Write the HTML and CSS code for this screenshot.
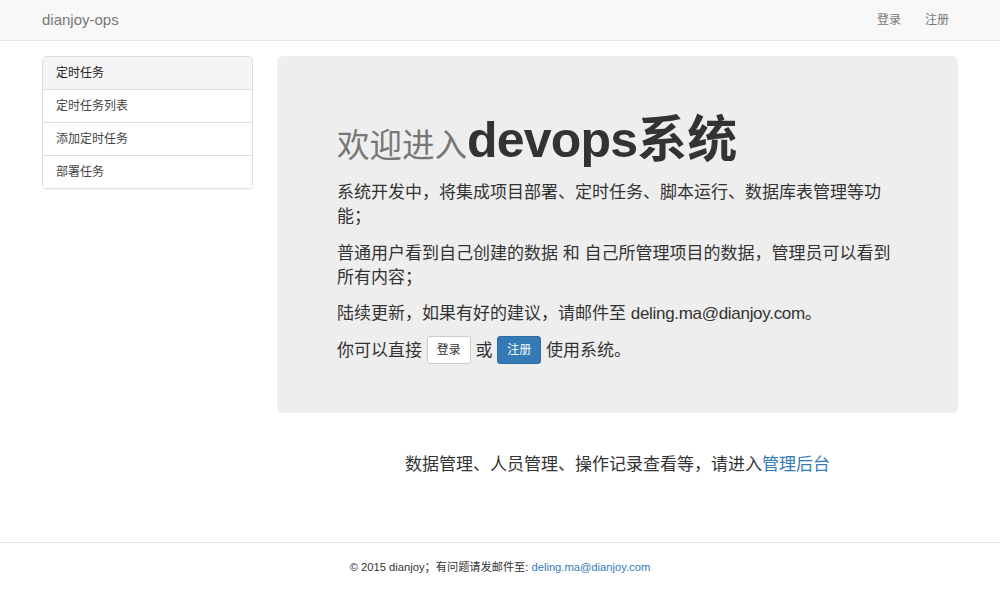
FILE: index.html
```html
<!DOCTYPE html>
<html lang="zh-CN">
<head>
<meta charset="utf-8">
<title>dianjoy-ops</title>
<link rel="stylesheet" href="styles.css">
</head>
<body>
<nav class="navbar">
  <div class="navbar-inner">
    <a class="brand" href="#">dianjoy-ops</a>
    <ul class="nav-right">
      <li><a href="#">登录</a></li>
      <li><a href="#">注册</a></li>
    </ul>
  </div>
</nav>
<main class="main">
  <aside class="sidebar">
    <div class="list-group">
      <div class="list-item list-head">定时任务</div>
      <a class="list-item" href="#">定时任务列表</a>
      <a class="list-item" href="#">添加定时任务</a>
      <a class="list-item" href="#">部署任务</a>
    </div>
  </aside>
  <section class="content">
    <div class="jumbotron">
      <h1><small>欢迎进入</small><span class="latin">devops</span>系统</h1>
      <p>系统开发中，将集成项目部署、定时任务、脚本运行、数据库表管理等功能；</p>
      <p>普通用户看到自己创建的数据 和 自己所管理项目的数据，管理员可以看到所有内容；</p>
      <p>陆续更新，如果有好的建议，请邮件至 <span class="mail">deling.ma@dianjoy.com</span>。</p>
      <p>你可以直接 <a class="btn btn-default" href="#">登录</a> 或 <a class="btn btn-primary" href="#">注册</a> 使用系统。</p>
    </div>
    <p class="admin-line">数据管理、人员管理、操作记录查看等，请进入<a href="#">管理后台</a></p>
  </section>
</main>
<footer class="footer">
  <p>© 2015 dianjoy；有问题请发邮件至: <a href="#">deling.ma@dianjoy.com</a></p>
</footer>
</body>
</html>
```

FILE: styles.css
```css
html, body {
  margin: 0;
  padding: 0;
}
body {
  font-family: "Liberation Sans", "Noto Sans CJK SC", sans-serif;
  color: #333;
  background: #fff;
  min-height: 100vh;
  display: flex;
  flex-direction: column;
  font-size: 14px;
  line-height: 1.42857;
}
a {
  color: #337ab7;
  text-decoration: none;
}
.navbar {
  background: #f8f8f8;
  border-bottom: 1px solid #e7e7e7;
  height: 40px;
}
.navbar-inner {
  width: 916px;
  margin: 0 auto;
  display: flex;
  justify-content: space-between;
  align-items: center;
  height: 40px;
}
.brand {
  color: #777;
  font-size: 15px;
  line-height: 40px;
}
.nav-right {
  list-style: none;
  margin: 0 -3px 0 0;
  padding: 0;
  display: flex;
}
.nav-right a {
  display: block;
  color: #777;
  font-size: 12px;
  line-height: 40px;
  padding: 0 12px;
}
.main {
  width: 916px;
  margin: 15px auto 0;
  display: flex;
  gap: 24px;
  align-items: flex-start;
}
.sidebar {
  width: 211px;
  flex: none;
}
.list-group {
  border: 1px solid #ddd;
  border-radius: 4px;
  overflow: hidden;
  box-shadow: 0 1px 1px rgba(0,0,0,0.04);
}
.list-item {
  display: block;
  padding: 8px 13px;
  font-size: 12px;
  line-height: 16px;
  color: #444;
  border-top: 1px solid #ddd;
  background: #fff;
}
.list-item.list-head {
  border-top: 0;
  background: #f5f5f5;
  color: #222;
}
.content {
  flex: 1;
}
.jumbotron {
  background: #eee;
  border-radius: 6px;
  padding: 57px 60px 49px;
}
.jumbotron h1 {
  margin: 0 0 13px;
  font-size: 50px;
  line-height: 1.1;
  font-weight: bold;
  color: #333;
}
.jumbotron h1 .latin {
  letter-spacing: -0.8px;
}
.jumbotron h1 small {
  font-size: 65%;
  font-weight: normal;
  color: #777;
}
.jumbotron p {
  font-size: 17px;
  line-height: 24px;
  margin: 0 0 13px;
}
.jumbotron p:nth-child(3) {
  margin-bottom: 12px;
}
.jumbotron p:last-child {
  margin-bottom: 0;
}
.mail {
  letter-spacing: -0.3px;
}
.btn {
  display: inline-block;
  vertical-align: middle;
  font-size: 12px;
  line-height: 16px;
  padding: 5px 9px;
  border-radius: 3px;
  border: 1px solid transparent;
  margin-top: -3px;
}
.btn-default {
  background: #fff;
  border-color: #ccc;
  color: #333;
}
.btn-primary {
  background: #337ab7;
  border-color: #2e6da4;
  color: #fff;
}
.admin-line {
  text-align: center;
  font-size: 17px;
  line-height: 24px;
  margin: 40px 0 0;
}
.footer {
  margin-top: auto;
  border-top: 1px solid #e5e5e5;
  padding: 16px 0 23px;
  text-align: center;
}
.footer p {
  margin: 0;
  font-size: 11.2px;
  line-height: 16px;
}
```
